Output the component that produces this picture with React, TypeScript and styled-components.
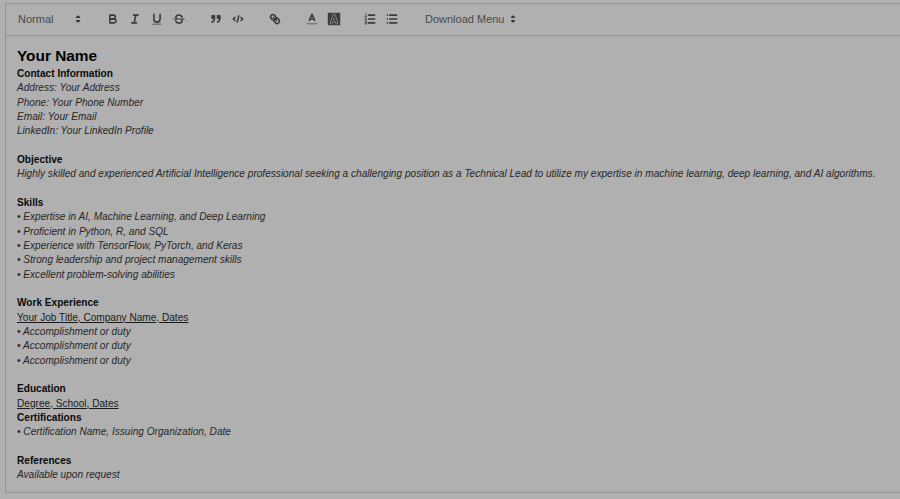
import React from "react";
import styled, { createGlobalStyle } from "styled-components";

const Global = createGlobalStyle`
  html, body { margin: 0; padding: 0; background: #b0b0b0; }
  body { font-family: "Liberation Sans", Arial, sans-serif; overflow: hidden; }
`;

const Page = styled.div`
  width: 900px;
  height: 499px;
  padding: 3px 0 0 5px;
  box-sizing: border-box;
  overflow: hidden;
  background: #b0b0b0;
`;

const Editor = styled.div`
  width: 905px;
  height: 490px;
  box-sizing: border-box;
  border: 1px solid #929292;
  display: flex;
  flex-direction: column;
`;

const Toolbar = styled.div`
  height: 32px;
  flex: none;
  box-sizing: border-box;
  border-bottom: 1px solid #929292;
  display: flex;
  align-items: center;
  padding: 0 0 1px 12px;
`;

const Picker = styled.span<{ $w: number; $ml?: number }>`
  width: ${(p) => p.$w}px;
  margin-left: ${(p) => p.$ml ?? 0}px;
  flex: none;
  display: flex;
  align-items: center;
  justify-content: space-between;
  font-size: 11px;
  color: #4a4a4a;
  white-space: nowrap;
`;

const Group = styled.div<{ $ml: number }>`
  display: flex;
  align-items: center;
  gap: 8px;
  margin-left: ${(p) => p.$ml}px;
`;

const Icon = styled.svg.attrs({ viewBox: "0 0 18 18" })`
  width: 14px;
  height: 14px;
  flex: none;
  display: block;
  fill: none;
  stroke: #3a3a3a;
  stroke-width: 2;
  stroke-linecap: round;
  stroke-linejoin: round;
`;

const Content = styled.div`
  flex: 1;
  padding: 9px 11px;
  font-size: 10.11px;
  line-height: 14.33px;
  white-space: nowrap;
`;

const Title = styled.div`
  font-size: 15.4px;
  line-height: 22px;
  font-weight: 700;
  color: #000;
`;

const Heading = styled.div`
  font-weight: 700;
  color: #0a0a0a;
`;

const Line = styled.div`
  font-style: italic;
  color: #262626;
`;

const Sub = styled.div`
  text-decoration: underline;
  color: #1a1a1a;
`;

const Gap = styled.div`
  height: 14.33px;
`;

const Sort = () => (
  <Icon style={{ strokeWidth: 1.6 }}>
    <path d="M7 11 9 13 11 11Z M7 7 9 5 11 7Z" fill="#3a3a3a" />
  </Icon>
);

const solid = { stroke: "none", fill: "#3a3a3a" };

export default function App() {
  return (
    <Page>
      <Global />
      <Editor>
        <Toolbar>
          <Picker $w={67}>
            Normal <Sort />
          </Picker>
          <Group $ml={21}>
            <Icon>
              <path d="M5,4H9.500A2.500,2.500,0,0,1,12,6.500v0A2.500,2.500,0,0,1,9.500,9H5V4Z" />
              <path d="M5,9h5.500A2.500,2.500,0,0,1,13,11.500v0A2.500,2.500,0,0,1,10.500,14H5V9Z" />
            </Icon>
            <Icon>
              <path d="M7 4H13M5 14H11M8 14 10 4" />
            </Icon>
            <Icon>
              <path d="M5,3V9a4,4,0,0,0,4,4h0a4,4,0,0,0,4-4V3" />
              <rect x="3" y="15" width="12" height="1" rx=".5" style={solid} />
            </Icon>
            <Icon>
              <path d="M2.500 9H15.500" style={{ strokeWidth: 1.400 }} />
              <path d="M13 6.500C12.500 4.800 11 3.800 9 3.800 6.800 3.800 5 5 5 6.800c0 .7.200 1.200.7 1.700M5 11.500c.5 1.700 2 2.700 4 2.700 2.200 0 4-1.200 4-3 0-.5-.1-.9-.4-1.300" />
            </Icon>
          </Group>
          <Group $ml={23}>
            <Icon>
              <rect x="4" y="5" width="3" height="3" style={{ fill: "#3a3a3a" }} />
              <rect x="11" y="5" width="3" height="3" style={{ fill: "#3a3a3a" }} />
              <path d="M7,8c0,4.031-3,5-3,5" />
              <path d="M14,8c0,4.031-3,5-3,5" />
            </Icon>
            <Icon>
              <path d="M5 7 3 9 5 11M13 7 15 9 13 11M10 5 8 13" />
            </Icon>
          </Group>
          <Group $ml={23}>
            <Icon>
              <path d="M7 7 11 11" />
              <path d="M8.900,4.577a3.476,3.476,0,0,1,.36,4.679A3.476,3.476,0,0,1,4.577,8.900C3.185,7.500,2.035,6.400,4.217,4.217S7.500,3.185,8.900,4.577Z" />
              <path d="M13.423,9.100a3.476,3.476,0,0,0-4.679-.36,3.476,3.476,0,0,0,.36,4.679c1.392,1.392,2.500,2.542,4.679.36S14.815,10.500,13.423,9.100Z" />
            </Icon>
          </Group>
          <Group $ml={23}>
            <Icon>
              <path d="M3 15H15" stroke="#7a7a7a" />
              <path d="M5.500 11 9 3 12.500 11M11.630 9H6.380" />
            </Icon>
            <Icon>
              <defs>
                <pattern id="hatch" width="2.570" height="2.570" patternUnits="userSpaceOnUse">
                  <rect width="1.285" height="1.285" fill="#6a6a6a" />
                  <rect x="1.285" y="1.285" width="1.285" height="1.285" fill="#6a6a6a" />
                </pattern>
              </defs>
              <rect x="1" y="1" width="16" height="16" style={{ stroke: "none", fill: "url(#hatch)" }} />
              <path d="M5.500 14 9 4 12.500 14M6.500 11H11.500" stroke="#b0b0b0" strokeWidth="3.500" />
              <path d="M5.500 14 9 4 12.500 14M11.630 11H6.380" />
            </Icon>
          </Group>
          <Group $ml={22}>
            <Icon>
              <path d="M7 4H15M7 9H15M7 14H15" />
              <path d="M3.500 2.500V5.500M2.500 5.800H4.500M2.500 8H4.500L2.500 10.500H4.500M2.500 12.500H4.500V15.500H2.500M3 14H4.500" style={{ strokeWidth: 1 }} />
            </Icon>
            <Icon>
              <path d="M6 4H15M6 9H15M6 14H15M3 4H3M3 9H3M3 14H3" />
            </Icon>
          </Group>
          <Picker $w={95} $ml={26}>
            Download Menu <Sort />
          </Picker>
        </Toolbar>
        <Content>
          <Title>Your Name</Title>
          <Heading>Contact Information</Heading>
          <Line>Address: Your Address</Line>
          <Line>Phone: Your Phone Number</Line>
          <Line>Email: Your Email</Line>
          <Line>LinkedIn: Your LinkedIn Profile</Line>
          <Gap />
          <Heading>Objective</Heading>
          <Line>Highly skilled and experienced Artificial Intelligence professional seeking a challenging position as a Technical Lead to utilize my expertise in machine learning, deep learning, and AI algorithms.</Line>
          <Gap />
          <Heading>Skills</Heading>
          <Line>• Expertise in AI, Machine Learning, and Deep Learning</Line>
          <Line>• Proficient in Python, R, and SQL</Line>
          <Line>• Experience with TensorFlow, PyTorch, and Keras</Line>
          <Line>• Strong leadership and project management skills</Line>
          <Line>• Excellent problem-solving abilities</Line>
          <Gap />
          <Heading>Work Experience</Heading>
          <Sub>Your Job Title, Company Name, Dates</Sub>
          <Line>• Accomplishment or duty</Line>
          <Line>• Accomplishment or duty</Line>
          <Line>• Accomplishment or duty</Line>
          <Gap />
          <Heading>Education</Heading>
          <Sub>Degree, School, Dates</Sub>
          <Heading>Certifications</Heading>
          <Line>• Certification Name, Issuing Organization, Date</Line>
          <Gap />
          <Heading>References</Heading>
          <Line>Available upon request</Line>
        </Content>
      </Editor>
    </Page>
  );
}
